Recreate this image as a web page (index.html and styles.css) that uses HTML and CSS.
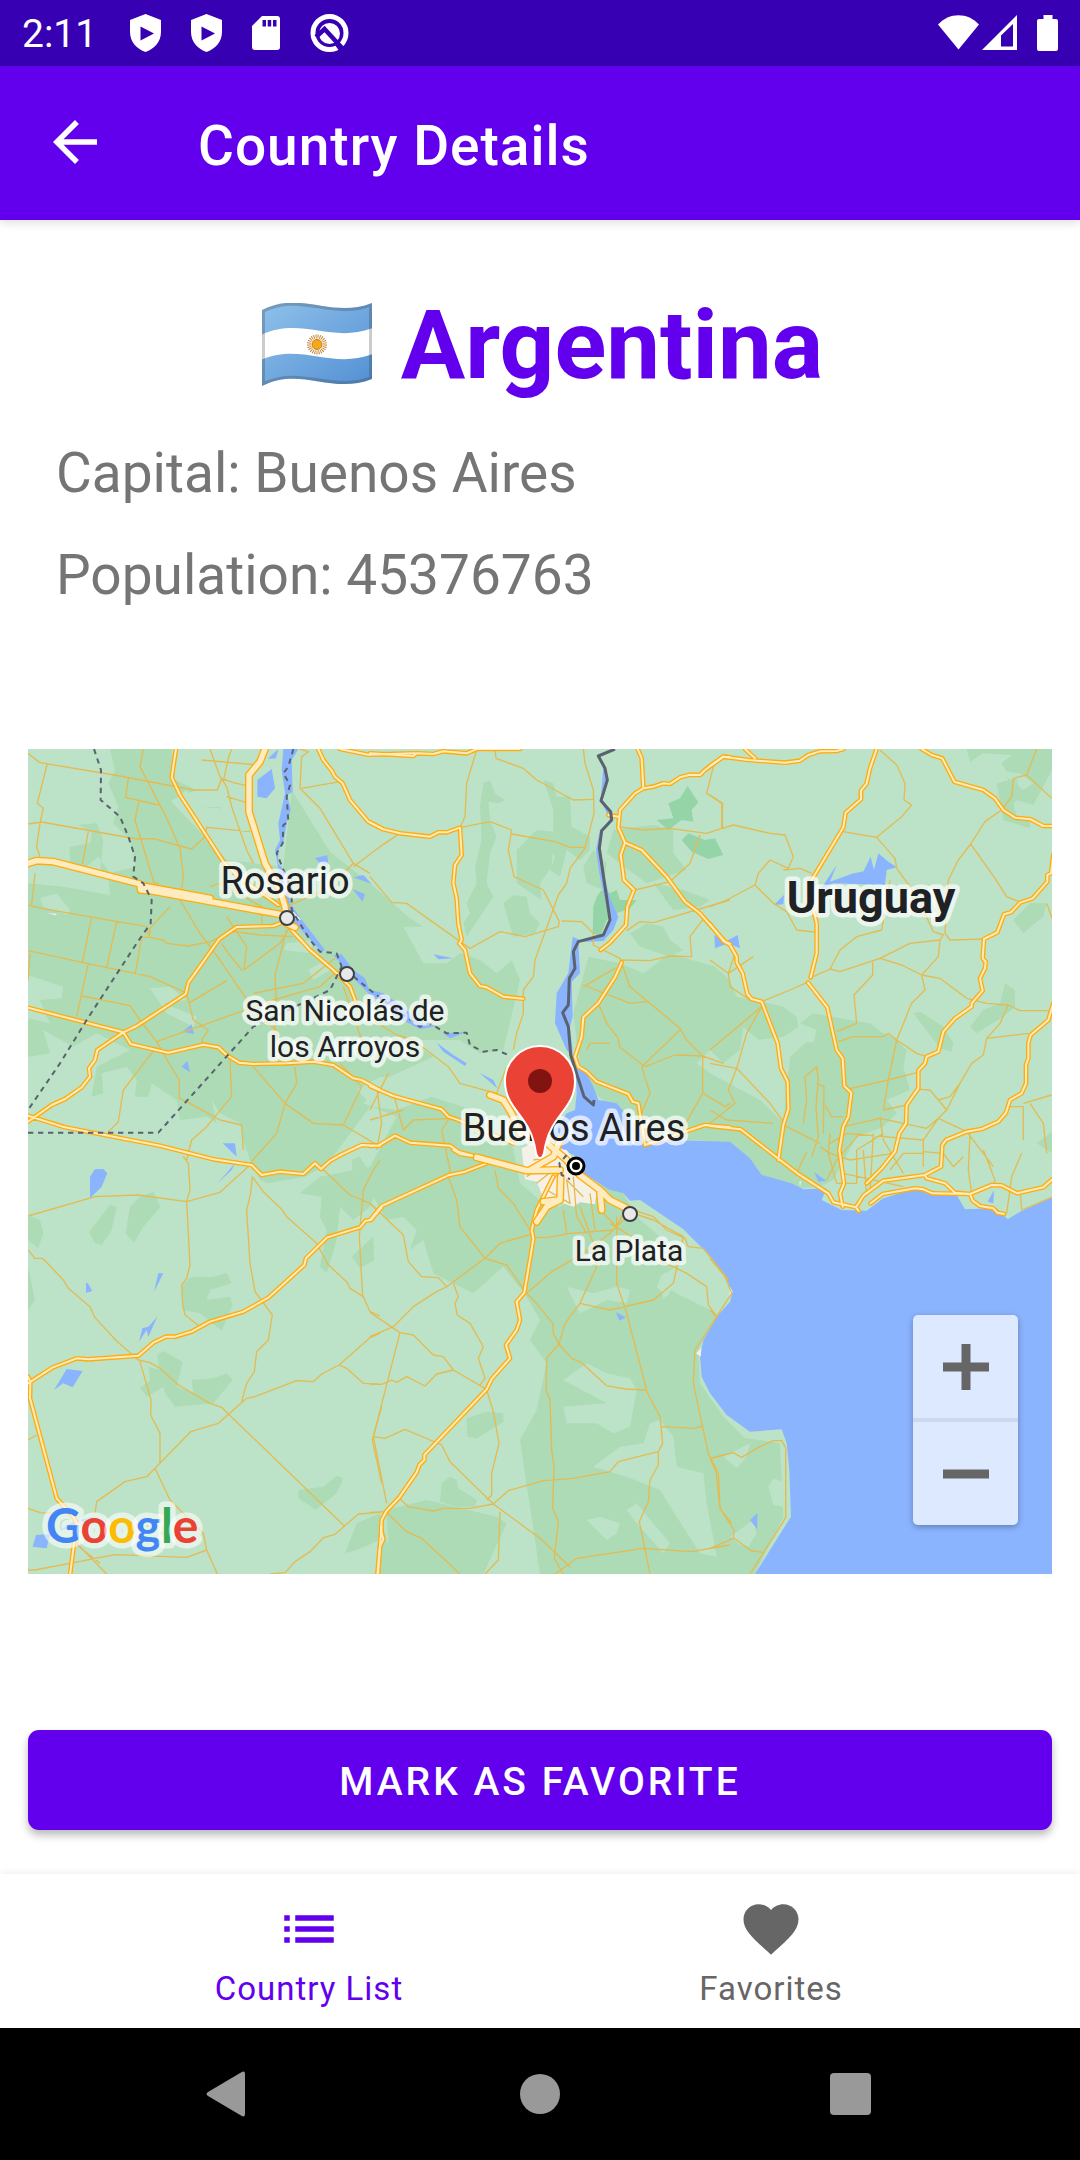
FILE: index.html
```html
<!DOCTYPE html>
<html lang="en">
<head>
<meta charset="utf-8">
<meta name="viewport" content="width=device-width, initial-scale=1">
<title>Country Details</title>
<link rel="stylesheet" href="styles.css">
</head>
<body>
<div class="screen">
  <div class="status-bar">
    <span class="clock">2:11</span>
    <div class="notifications">
      <svg width="31" height="38" viewBox="0 0 31 38"><path fill="#fff" fill-rule="evenodd" d="M15.500 0L31 6V18C31 28 24 35 15.500 38C7 35 0 28 0 18V6ZM10.500 12.500V26.500L24 19.500Z"/></svg>
      <svg width="31" height="38" viewBox="0 0 31 38"><path fill="#fff" fill-rule="evenodd" d="M15.500 0L31 6V18C31 28 24 35 15.500 38C7 35 0 28 0 18V6ZM10.500 12.500V26.500L24 19.500Z"/></svg>
      <svg width="28" height="34" viewBox="0 0 28 34"><path fill="#fff" fill-rule="evenodd" d="M10 0H25a3 3 0 0 1 3 3V31a3 3 0 0 1-3 3H3a3 3 0 0 1-3-3V10ZM10.500 4v6.500h3.500V4ZM15.700 4v6.500h3.500V4ZM21 4v6.500h3.500V4Z"/></svg>
      <svg width="39" height="38" viewBox="0 0 39 38"><circle cx="19.500" cy="19" r="16.500" fill="none" stroke="#fff" stroke-width="5"/><circle cx="19.500" cy="19.500" r="10.500" fill="#fff"/><path d="M6 23 14.500 15 33 35" fill="none" stroke="#3700b3" stroke-width="4.500"/><path d="M26 30 31 37" stroke="#3700b3" stroke-width="3"/></svg>
    </div>
    <div class="system-icons">
      <svg width="41" height="36" viewBox="0 0 41 36"><path fill="#fff" d="M20.500 34.500 0 9.500C11-3 30-3 41 9.500Z"/></svg>
      <svg width="35" height="36" viewBox="0 0 35 36"><path fill="#fff" fill-rule="evenodd" d="M0 35 35 0V35ZM19 20.500V31.500H31V9Z"/></svg>
      <svg class="battery" width="21" height="36" viewBox="0 0 21 36"><path fill="#fff" d="M6.500 0h9v4H19a2 2 0 0 1 2 2V34a2 2 0 0 1-2 2H2a2 2 0 0 1-2-2V6a2 2 0 0 1 2-2h4.500Z"/></svg>
    </div>
  </div>

  <header class="app-bar">
    <button class="icon-button" type="button" aria-label="Back">
      <svg width="66" height="66" viewBox="0 0 24 24"><path fill="#fff" d="M20 11H7.830l5.590-5.590L12 4l-8 8 8 8 1.410-1.410L7.830 13H20v-2z"/></svg>
    </button>
    <h1>Country Details</h1>
  </header>

  <main>
    <h2 class="country">
      <svg class="flag" width="112" height="84" viewBox="0 0 112 84" aria-label="Flag">
        <defs>
          <linearGradient id="sky" x1="0" y1="0" x2="1" y2="1"><stop offset="0" stop-color="#8fc1ea"/><stop offset="1" stop-color="#528fd3"/></linearGradient>
          <clipPath id="wave"><path d="M1 7C40-13 70 16 111 0V76C70 92 40 63 1 83Z"/></clipPath>
        </defs>
        <g clip-path="url(#wave)">
          <path fill="url(#sky)" d="M0 0H112V84H0Z"/>
          <path fill="#fff" d="M0 32C40 13 70 41 112 25V51C70 67 40 39 0 57Z"/>
          <circle cx="56" cy="41.500" r="8" fill="none" stroke="#c88a3a" stroke-width="4" stroke-dasharray="1 1"/>
          <circle cx="56" cy="41.500" r="5" fill="#f6a816" stroke="#c47a1c"/>
          <path fill="none" stroke="#333" stroke-opacity=".25" stroke-width="6" d="M1 7C40-13 70 16 111 0V76C70 92 40 63 1 83Z"/>
        </g>
      </svg>
      <span>Argentina</span>
    </h2>
    <div class="facts">
      <p>Capital: Buenos Aires</p>
      <p>Population: 45376763</p>
    </div>

    <section class="map" aria-label="Map">
      <svg class="map-canvas" viewBox="0 0 1024 825">
        <defs>
          <g id="roads">
            <path d="M468 27 455 112 480 165 610 365 655 410 775 495M895 27 910 60 935 92 945 110 968 130 990 180 1045 245 1085 265M960 27 1045 44 1185 40M24 803 310 877 332 912 445 938 550 914 595 922 620 945 657 968 700 972 800 970 880 965 940 975 1000 1015 1025 1020 1080 1050M780 550 760 558 650 561 598 597 505 728 497 762 350 858 310 877 232 930 225 960 207 985 210 1010 185 1042 135 1077 95 1095 24 1145M24 1127 135 1162 420 1217 580 1258 695 1275 725 1305 780 1295 850 1302 885 1270 903 1287 930 1263 965 1243 1025 1215 1080 1217"/>
            <path d="M815 570 870 630 940 690 990 740 1005 780"/>
            <path transform="translate(1050)" d="M0 40 130 48 140 40 190 42 220 34 290 40 320 27 450 27M0 247 40 268 90 280 180 290 205 277 230 277 270 263 275 345 255 375 250 430 260 475 265 550 275 600 268 610 285 630 300 700 330 738 350 742 400 770 460 776M803 27 815 55 820 145 795 160 750 210 745 262 765 308 752 345 762 420 792 450 772 500 768 555 720 608 692 630M715 225 745 230M820 145 850 140 880 130 900 132 930 112 960 104 990 105 1005 90 1060 50 1080 52M765 308 815 330 890 410 945 485 990 520 1065 605 1080 612M755 667 735 712 685 790 640 832 635 890 615 950 625 980 650 995 680 1025 775 1062 788 1085 805 1090 825 1215 1005 1155 1080 1162M0 1038 70 1068 215 1108 235 1130 260 1138 360 1180 430 1210M0 1218 25 1217 75 1187 120 1208 240 1217 265 1235 320 1250"/>
            <path transform="translate(2070)" d="M0 78 40 50 115 60 225 68 270 62 295 45 330 34 380 33 400 27M105 27 135 55M500 27 480 85 470 130 453 152 453 178 407 218 400 262 305 420 300 470 320 550 320 640 302 712M294 728 352 802 380 930 398 955 403 1038 424 1058 415 1130 400 1160 388 1230 402 1330 390 1360 398 1400M635 27 665 45 697 55 733 125 820 150 855 175 880 210 915 233 962 238 1000 258 1030 258M1030 345 1023 400 1012 405 1012 425 968 475 930 488 903 517 882 523 862 577 822 597 818 655 827 665 825 685 810 715 818 752 785 790 785 800 735 835 700 875 685 935 650 950 645 970 625 992 625 1045 590 1095 588 1150 568 1180 555 1235 515 1285 470 1330M1030 790 1015 840 962 885 955 910 955 955 948 975 948 1030 935 1060 900 1080 888 1118 865 1145 815 1167 770 1175 708 1200 697 1215 693 1280 645 1305 520 1322 460 1367 438 1402 370 1387 355 1360 262 1300 92 1168 0 1158M0 552 40 603 60 615 80 650 80 667 98 700 112 762 125 777 155 785 203 910 213 985 233 1025 235 1108 220 1155 205 1260M645 1305 650 1315 705 1330 735 1358 780 1362 845 1335 875 1336 922 1360 1000 1342 1030 1315M482 1390 518 1362 615 1345 640 1348 668 1360 780 1362 788 1382 810 1398 850 1405 862 1418 882 1422M438 1402 446 1413"/>
            <path transform="translate(0 1230)" d="M1085 172 1053 210 1037 212 1020 232 922 262 858 325 853 345 745 443 670 485 570 515 515 545 465 560 438 560 400 578 355 617 205 628 170 625 97 653 24 700M24 680 31 695 30 745 110 1045 160 1100 170 1120 150 1275M1085 1130 1072 1275"/>
            <path transform="translate(1050 1230)" d="M0 210 35 168 235 76 285 65 350 40M250 0 270 12 320 20M485 240 490 265 483 310 463 428 440 455 450 510 440 540 408 585 420 625 365 687 350 718 163 915 163 930 148 945 140 967 88 1042 48 1085 35 1110 33 1140 40 1168 30 1190 24 1275M550 80 500 180 485 240"/>
          </g>
          <g id="highways">
            <path d="M24 370 50 362 100 365 360 432 362 450 390 452 780 523M370 438 570 475M735 27 720 65 687 105 687 215 735 370 780 450 795 500 800 550 825 562"/>
            <path d="M1370 1252 1520 1292 1620 1290M1410 1065 1450 1080 1475 1120 1500 1180 1570 1200M1620 1200 1600 1250 1530 1290M1570 1200 1640 1260 1680 1305 1740 1350 1770 1380 1830 1410M1740 1360 1745 1410M1622 1310 1620 1380 1580 1400 1550 1445M1570 1385 1620 1380"/>
          </g>
        </defs>
        <rect class="land" width="1024" height="825"/>
        <g transform="translate(-8 -9) scale(.333333)">
          <g class="grass">
            <path d="M270 27 285 90 265 130 295 200 280 250 330 300 345 380 270 400 235 350 175 400 150 370 148 320 210 310 215 275 175 255 230 250 250 300 240 400 265 410 270 465 130 440 24 430V705L130 740 125 775 60 780 90 850 24 835V950L90 940 70 870 160 920 230 880 330 930 230 980 215 1070 250 1060 245 1000 320 980 350 1020 345 1070 385 1070 395 1030 470 1080 480 1140 560 1130 590 1150 575 1080 600 1120 660 1150 670 1200 690 1260 720 1320 740 1330 855 1310 920 1275 1080 1060 1200 1060 1390 1120 1450 1150 1480 1230 1500 1330 1570 1390 1620 1400 1720 1330 1800 1345 1850 1430 2000 1560 1920 1610 1930 1680 1950 1650 2090 1720 2035 1830 2040 1930 2110 2030 2180 2100 2180 2240 2080 2280 2060 2260 2110 2250 2090 2160 2150 2090 2280 2110 2290 2330 2205 2502H1390L1460 2350 1430 2330 1220 2280 1100 2310 1105 2420 1080 2320 1010 2350 975 2440 1010 2430 1080 2400V2502H1560L1500 2100 1550 2010 1580 1870 1530 1800 1560 1740 1520 1670 1450 1580 1360 1660 1240 1600 1210 1500 1170 1530 1190 1470 1150 1430 1100 1440 1060 1370 1050 1400 1000 1440 960 1400 950 1500 920 1600 900 1580 920 1470 900 1430 905 1370 840 1360 900 1310 1050 1280 1130 1130 1030 1090 1110 1010 1240 950 1170 900 1320 900 1380 940 1450 930 1500 720 1475 660 1430 700 1380 660 1320 640 1280 670 1210 670 1150 560 1210 560 1165 530 1050 430 980 375 930 335 815 150 790 380 700 370 650 330 625 280 600 200 500 205 455 180 530 150 465 120 455 27Z"/>
            <path d="M1390 130 1410 120 1425 160 1455 180 1435 190 1405 185 1410 240 1430 290 1410 340 1400 430 1420 470 1340 590 1330 550 1350 520 1340 490 1370 430 1365 380 1385 300 1380 200ZM1570 120 1600 130 1610 170 1650 170 1655 260 1710 290 1710 330 1680 360 1640 330 1620 410 1590 390 1605 350 1580 310 1600 300V210ZM1490 330 1550 270 1600 275 1595 380 1560 430 1565 480 1490 430ZM1450 490 1480 465 1520 470 1530 520 1560 550 1545 580 1480 590ZM1720 330 1760 370 1750 450 1700 430 1690 380ZM1780 270 1900 255 1960 270 1960 340 2000 390 1880 430 1760 340ZM1900 430 1990 450 2070 480 2040 500 1960 510ZM1830 580 1880 550 1930 560 1950 600 1990 630 1950 650 1860 620ZM1705 650 1800 670 1870 700 1950 640 2085 680 2130 720 2150 770 2200 780 2290 800 2330 830 2335 860 2290 890 2215 900 2170 860 2160 930 2110 970 2070 930 2030 970 2070 1000 2220 1080 2290 1150 2310 950 2360 905 2400 910 2410 950 2380 910 2390 870 2340 850 2380 820 2490 840 2550 850 2590 880 2620 890 2660 930 2650 980 2670 1050 2600 1080 2630 1120 2590 1160 2510 1190 2440 1320 2400 1340 2345 1345 2220 1310 2120 1205 1890 1195 1700 1040 1680 980 1660 820ZM2680 820 2700 815 2770 860 2800 910 2795 935 2760 925ZM2850 860 2890 810 2940 790 2955 730 2985 750 2985 800 2950 830 2900 860 2870 880ZM2980 540 3030 490 3080 490 3070 530 3010 580ZM3050 1210 3096 1175V1240ZM2840 27H3096V90L3040 195 2990 180 2960 110 3010 150 3040 130 3000 100 2960 95 2945 70 2975 45 2890 40 2850 65ZM2930 130 2990 115 3000 170 2980 190 2990 230 3030 245 3030 265 2950 240Z"/>
            <path d="M270 1395 290 1400 275 1470 245 1515 225 1510 207 1475ZM360 1370 400 1355 422 1400 370 1460 342 1508 317 1480 330 1400ZM24 1425 60 1440 70 1480 55 1525 24 1500ZM24 1580 45 1680 24 1710ZM510 1612 580 1610 620 1598 635 1630 570 1650 560 1680 630 1670 638 1695 605 1772 540 1720 490 1710 485 1640ZM410 1845 430 1833 488 1865 470 1940 520 1960 515 1920 580 1915 620 1900 638 1920 580 1990 465 2000 435 1960 430 1940 380 1970 360 1945 390 1920 385 1880 420 1890ZM835 2250 910 2240 950 2207 970 2215 950 2260 887 2310 835 2275ZM995 1260 1020 1250 1050 1300 1030 1340 985 1340 1000 1310ZM995 1550 1060 1490 1063 1560 1020 1585ZM1340 2035 1400 2015 1450 2020 1450 2045 1370 2095 1342 2090ZM1260 2285 1265 2230 1290 2210 1310 2220 1315 2245 1370 2280 1365 2300 1310 2300Z"/>
          </g>
          <g class="land">
            <path d="M455 185 500 150 520 200 600 205 640 310 710 370 620 360ZM640 27 700 27 680 80 600 70ZM60 475 110 460 150 510 140 525 70 500ZM390 745 450 740 500 780 430 790 530 830 520 860 440 820ZM800 610 880 600 870 640 790 630ZM865 690 900 670 930 690 880 720ZM1010 1050 1080 1010 1180 1020 1240 1010 1260 1060 1130 1110 1060 1100ZM1640 1640 1720 1660 1790 1640 1830 1650 1820 1690 1760 1680 1680 1720ZM1930 1600 2020 1580 2060 1640 1990 1600 1940 1670 1910 1640ZM1630 1920 1700 1870 1760 1900 1830 1915 1850 1950 1830 2060 1780 2080 1730 2050 1640 2050 1630 2000 1760 1990ZM1720 2180 1800 2120 1870 2110 1890 2050 1920 2040 1960 2090 1970 2180 2050 2200 2060 2290 2090 2450 2040 2440 1970 2330 1920 2250 1820 2210ZM1700 2340 1740 2330 1800 2350 1790 2380 1760 2400ZM1820 2310 1850 2290 1950 2410 1930 2440 1850 2350ZM2110 2150 2190 2110 2180 2150 2150 2185ZM2130 2390 2200 2340 2210 2380 2185 2420 2160 2415ZM2245 2240 2260 2215 2290 2225 2290 2300 2260 2295Z"/>
          </g>
          <g class="forest">
            <path d="M1945 190 1980 175 2003 138 2035 187 2015 210 2020 245 1985 240 1945 270 1910 240 1960 235ZM1985 300 2005 280 2055 300 2085 295 2110 345 2065 357 2015 335ZM1730 470 1745 450 1770 460 1790 450 1800 480 1850 480 1830 505 1790 520 1760 540 1740 590 1718 580 1720 500ZM2510 400 2540 390 2550 430 2510 430Z"/>
          </g>
          <g class="water">
            <path d="M1650 935 1675 985 1690 980 1720 1040 1735 1080 1790 1090 1850 1160 1875 1200 1950 1200 2130 1205 2190 1255 2225 1305 2315 1330 2350 1348 2420 1345 2405 1380 2465 1410 2540 1412 2590 1375 2690 1345 2810 1365 2835 1408 2930 1405 2963 1438 3000 1415 3096 1370V2502H2205L2313 2330 2308 2190 2300 2110 2285 2068 2190 2075 2120 2025 2070 1960 2045 1910 2040 1850 2050 1800 2090 1730 2130 1685 2137 1655 2112 1605 2070 1548 1990 1468 1860 1380 1830 1382 1810 1360 1765 1348 1690 1300 1670 1250 1630 1230 1590 1190 1640 1120 1665 1110 1670 1060 1668 1000Z"/>
            <path d="M1750 80 1765 120 1748 180 1775 215 1765 250 1745 275 1738 320 1750 400 1770 475 1795 530 1780 570 1750 603 1710 605 1675 605 1680 700 1655 725 1658 830 1650 860 1660 950 1640 930 1605 850 1610 760 1645 700 1658 590 1680 600 1745 585 1768 540 1738 400 1728 330 1740 270 1770 240 1742 180ZM750 50 775 27 768 55 745 57ZM790 27H835L815 60 818 155 802 165 812 210 800 250 790 310 775 330 775 370 800 400 810 490 850 545 915 630 905 635 820 545 790 470 765 330 780 300 775 250 795 160 785 90ZM712 120 755 87 765 145 740 175 712 170ZM885 355 922 345 925 375 900 370ZM1000 412 1030 405 1055 432ZM998 448 1035 462 1028 485ZM940 645 965 643 1000 690 1035 715 1050 755 1080 755 1090 780 1060 775 1000 715ZM488 875 515 853 522 882ZM485 980 502 962 510 997ZM608 1210H645L650 1250ZM1050 750 1090 760 1150 800 1200 850 1250 858 1200 868 1130 830ZM1270 880 1340 876 1290 895ZM1250 908 1300 945 1340 970 1335 978 1270 935ZM1378 998 1420 1020 1432 1045ZM1240 643 1300 655 1255 658ZM2400 450 2450 375 2430 425 2500 400 2530 395 2552 350 2562 390 2575 340 2605 365 2630 382 2600 390 2595 435 2440 430ZM2262 495 2292 465 2290 493ZM2083 585 2115 605 2153 585 2160 625 2125 610 2085 625ZM2383 1297 2420 1323 2395 1325ZM2903 1385 2922 1350 2920 1390Z"/>
            <path d="M210 1310 225 1287H250L262 1300 245 1340 210 1375ZM593 1330 645 1270 635 1290ZM198 1628 203 1629 217 1653 198 1658ZM402 1655 415 1600H430ZM357 1805 367 1765 385 1760 412 1730 385 1790 380 1770ZM102 1950 140 1887 188 1893 158 1942 130 1930ZM38 2420 48 2385 90 2382 80 2425ZM120 2370 160 2345 220 2330 200 2360ZM1788 1717 1818 1732 1798 1742ZM2190 2340 2212 2320V2368Z"/>
          </g>
          <g class="city">
            <path d="M1505 1225 1560 1200 1600 1225 1640 1230 1690 1300 1730 1350 1725 1393 1680 1387 1660 1400 1630 1390 1570 1375 1550 1325 1515 1318Z"/>
            <path d="M2044 1825 2042 1850 2028 1840ZM815 510 845 540 825 535ZM2130 1640 2138 1655 2128 1670ZM80 520 110 521 108 526ZM2338 1325 2344 1322 2340 1340Z"/>
          </g>
          <g class="lanes">
            <path d="M24 40 60 68 300 108 520 150 592 150 605 115 640 128 680 137M370 27 360 80 438 230 480 325M82 70 52 190 70 205 60 250 50 320 60 350M24 252 65 246 350 297 400 296 515 327 555 290 560 262 690 275M205 275 187 372M325 115 317 172 415 195 357 182 345 240 402 428 415 430M480 325 490 410 480 480 540 580 600 660 715 830 770 870 775 960M570 27 600 110 620 140 635 200 680 330 700 370M610 125 625 55 635 27M620 170 680 188M545 60 715 75M45 400 35 495M24 495 65 505 380 560 388 592 430 600 440 610 505 618 570 605 640 575 720 585 820 590M388 592 390 565 450 500M24 632 200 670 390 710 497 758M215 530 187 668M290 545 260 683M388 592 365 592 345 705M205 670 170 830M187 768 330 797 360 840 410 905 450 975 478 1020 478 1075 500 1085 600 1140 665 1155 670 1230M30 640 24 720M800 570 765 705 770 820 760 900M625 640 665 690 625 640 605 610M620 530 680 620 672 690 780 610 810 560M505 790 620 722M500 760 520 840 565 870 545 900 555 920M410 905 620 830 760 780 900 740 955 690M945 655 900 690 850 730 700 760M410 920 310 1050 295 1145 265 1175M700 980 795 1090 770 1180 690 1270M630 960 635 1070 560 1160 515 1200 500 1260M795 1090 880 1150 970 1155 1080 1220M825 980 830 1030 795 1090M960 970 1025 1040 970 1155M970 740 1025 900M838 27 865 35 845 50 840 145 900 205 1000 370 990 380 940 430 900 455 800 500M845 145 960 125M1000 370 1050 400M1000 380 1080 320 1135 283M725 560 725 500 600 430 570 440"/>
            <path transform="translate(1050)" d="M320 30 290 130 285 230 270 263 360 245 425 270 415 330 432 410 520 450 568 545M425 282 555 305 600 322 645 322M375 27 378 55 460 85 500 120 610 180 670 178M568 545 565 560 465 590 390 575 300 625 215 565 110 490 65 487 0 410M575 543 635 545 670 580 670 615 750 655 780 740 930 865 950 900 998 948 998 1060M755 660 840 662 900 648 965 650 960 590 1005 530M640 740 735 685M640 735 780 790 830 785M685 790 710 850 745 895 748 920 825 980 915 945 998 948 1060 970M745 260 820 270 900 265 1010 280 1055 265 1058 190 1010 160 1030 80M990 285 960 370 900 425 795 450M770 572 810 545 850 548 1080 480M930 870 815 980 840 1060 810 1130M650 930 660 910 720 910M998 1060 930 1180M1000 1060 1065 1100 1080 1090M0 1110 55 1000M0 1140 100 1110M70 1060 100 1170 130 1140 250 1135M20 1040 35 1150 20 1230M235 1140 215 1170 240 1290 235 1310"/>
            <path transform="translate(2070)" d="M0 165 35 190 38 265 70 255 180 280 225 285 250 350 235 385 180 360 145 400 135 435 190 490 230 515 260 570 320 577M0 500 50 480 135 435M220 390 270 385 305 400M510 30 560 75 585 130 582 180 605 195 575 230 500 292 400 275M500 292 555 355 560 385 600 440 640 510 670 575 700 585 690 600 600 610 510 655 390 695 360 687 390 630 440 590 515 570 540 420M310 710 360 687M155 785 240 750 290 728M488 660 488 705 432 765 440 850 380 875M385 905 430 890 520 890 535 880 560 900 620 940 650 950M510 655 575 675 635 705 690 715 770 775 830 790 895 795 930 812 1030 812M690 600 685 650 635 705 645 750 605 790 560 900 535 1020 520 1110M715 420 705 580 720 600 820 597M715 420 745 360 782 312 825 245 875 210 905 170 910 115 950 105 980 27M950 105 1025 175M782 312 855 415 890 470 935 488M895 795 870 850 830 895 820 945 785 970 750 1030 720 1070 685 1080 660 1050 628 1048M830 895 955 880M410 1048 535 1020 620 998M400 1160 510 1135 650 1165 685 1135 770 1175 850 1280M685 1080 710 1110 685 1135 640 1200 640 1280M710 1110 750 1030M0 970 80 985 180 1090 230 1160 330 1210M80 985 55 1050 75 1090 0 1150M80 985 110 880 155 800 0 930M0 1110 50 1140 190 1150M280 1150 290 1080 285 1010 320 980 325 1020 318 1100 325 1190 305 1250M320 1030 342 1040 340 1180M345 1095 365 1130 400 1130M520 1110 590 1095M510 1130 520 1200 580 1300M520 1180 440 1230 440 1330 380 1330M360 1210 410 1180 640 1200M330 1220 360 1240 420 1260 550 1240M450 1180 380 1260 350 1320M360 1180 355 1240 380 1330M490 1180 480 1360M400 1300 580 1340M460 1230 470 1370M780 1180 775 1290 785 1360M820 1230 855 1320 850 1340M935 1240 905 1310 890 1420M940 1200 940 1100 890 1100M940 1090 1025 1065M960 1090 1000 1150 1010 1240M930 1350 935 1410 1030 1370M260 1300 290 1235M640 1235 700 1240 730 1280 760 1250M640 1240 580 1240 540 1290M130 650 55 700 60 740 120 780M0 660 55 700 75 640M1010 490 1030 545"/>
            <path transform="translate(0 1230)" d="M24 198 225 140 355 135 500 155 600 127 690 45M24 300 45 325 68 325 130 390 145 415 210 470 225 503 290 573 355 630 390 638 420 655 475 705 570 760 605 772 625 792 805 965 975 1130M500 155 510 345 500 385 485 405 488 465 495 495 540 530M490 20 505 40 510 120 500 155M697 80 730 125 785 178 800 200 890 280 925 345 980 395 990 415 1030 440 1050 485 1080 498M697 80 692 130 680 180 690 340 705 425 757 495 745 570 710 605 703 665 680 700 665 755M895 45 990 135 1050 160 1080 190M1080 30 1060 60 1030 120 1018 260 1028 440M1080 550 1050 563 957 645 905 672 880 695 830 692 705 740 680 745 595 820 512 845 380 980 315 995 230 1055 225 1090M957 645 980 655 1030 700 1080 703M360 635 393 750 392 795 420 850 420 940M405 955 450 1050 550 1150 560 1200 592 1272M24 870 50 855M24 1075 60 1088 130 1090M24 1260 45 1260 285 1214 500 1222 560 1200M170 1180 260 1272M750 1272 795 1268 825 1235 870 1205 910 1163 945 1153 1015 1092 1080 1087M1085 770 1057 870 1085 1000M240 1240 170 1185"/>
            <path transform="translate(1050 1230)" d="M0 160 100 255 115 335 155 380 205 383 230 410 345 325 410 345 470 430 495 455 548 520 550 550 567 582 605 625 635 638 710 707 765 717 828 720 870 800 878 880 865 905 865 945 840 990 835 1055 808 1115 840 1272M235 80 260 150 270 230 345 325 390 280 485 252M470 430 545 365 640 310 720 250 780 190M375 60 385 115 430 160 480 240M490 262 530 263 600 250 730 240M250 400 265 440 255 460 262 495 300 520 340 590 325 625 345 685 330 705M350 718 250 660 220 620 190 615 130 555 90 548 0 487M0 560 70 530 130 470 200 425 235 408M90 548 10 860 50 1060M0 702 35 703 65 690 80 697 110 680 165 708 200 672 250 660M10 860 45 865 105 838 180 870 215 885 240 935 370 1062 510 1165 600 1250M350 720 370 785 387 880 365 970 365 1035 350 1050M88 1045 115 1070 190 1083 220 1075 300 1075 370 1062 415 1022 520 992 610 985 720 965 745 935 865 905M390 1085 385 1230 345 1272M0 1087 48 1085 110 1145 155 1165 270 1272M567 582 530 625 528 720 540 750 545 900 552 950 548 1075 565 1115 553 1225 580 1272M555 1272 620 1225 820 1195 965 1205 1080 1185M567 582 585 520 630 460 720 480 850 450 910 400 940 260 850 210 790 190M630 460 680 350 670 280 630 170M740 200 740 400 770 490 830 720M720 220 770 250 860 325 950 370 1010 410 1015 465 1040 500 975 600 970 700 1015 910 1045 970 1050 1075 1085 1120M875 830 975 835 995 828M1025 925 1080 910M790 180 850 200 890 240 945 265 955 290 1000 295 1075 390M580 180 590 250M660 130 675 240M700 190 740 230 760 190M570 60 530 120 600 160 590 90 640 140M500 100 550 60M470 80 560 20 490 30M610 80 620 200 650 250"/>
            <path transform="translate(2070 1230)" d="M0 325 45 380 65 430 0 530M0 480 20 500M0 925 70 908 95 922 150 890 190 872 215 872 227 893V1103L120 1272M0 925 18 965 30 1075 72 1140 70 1165 0 1195M72 1165 125 1203 160 1207"/>
            <path d="M1690 27 1695 70 1720 150 1722 220 1695 325 1650 385 1640 430 1615 465 1545 660 1540 710 1510 750V820L1490 880 1480 930M1460 980 1430 1060 1320 1030 1285 980 1180 900 1130 885 1040 830 1005 780"/>
          </g>
          <use href="#roads" class="road-edge"/><use href="#roads" class="road"/>
          <use href="#highways" class="highway-edge"/><use href="#highways" class="highway"/>
          <path class="province" d="M222 27 243 90 242 180 300 230 325 290 345 350 340 410 370 430 395 480 392 550 350 610 200 840 120 970 24 1110M24 1178H415L700 860 930 750 965 680M820 27 805 80 790 100 810 135 800 170 805 245 790 255 788 310 770 340 815 450 815 510 870 600 900 635 950 640 965 680 1050 750 1130 810 1200 860 1230 850 1280 880 1340 878 1350 915 1390 935 1430 930 1465 945"/>
          <path class="province" d="M1640 1245 1618 1270 1625 1305 1650 1318"/>
          <path class="border" d="M1785 27 1735 48 1755 85 1762 120 1743 182 1772 215 1775 240 1745 272 1738 325 1770 540 1750 585 1675 605 1660 635 1665 685 1648 715 1645 795 1628 818 1645 860 1652 945 1692 1070 1720 1095 1722 1080"/>
        </g>
        <g class="town">
          <circle cx="259" cy="169" r="7"/><circle cx="319" cy="225" r="7"/><circle cx="602" cy="465" r="7"/>
        </g>
        <circle class="capital-ring" cx="548" cy="417" r="8"/><circle cx="548" cy="417" r="4"/>
        <g class="map-label">
          <text class="city-name" x="257" y="145">Rosario</text>
          <text class="city-name" x="546" y="392">Buenos Aires</text>
          <text class="town-name" x="317" y="272">San Nicolás de</text>
          <text class="town-name" x="317" y="308">los Arroyos</text>
          <text class="town-name" x="601" y="512">La Plata</text>
          <text class="nation-name" x="843" y="164">Uruguay</text>
        </g>
        <path class="pin" d="M512 409C507 409 508 400 506 394 499 365 477 359 477 332A35 35 0 0 1 547 332C547 359 525 365 518 394 516 400 517 409 512 409Z"/>
        <circle cx="512" cy="332" r="12" fill="#811411"/>
        <text class="brand" x="18" y="794"><tspan fill="#4285f4">G</tspan><tspan fill="#ea4335">o</tspan><tspan fill="#fbbc05">o</tspan><tspan fill="#4285f4">g</tspan><tspan fill="#34a853">l</tspan><tspan fill="#ea4335">e</tspan></text>
      </svg>
      <div class="zoom">
        <button type="button" aria-label="Zoom in"><svg width="46" height="46" viewBox="0 0 46 46"><path d="M0 18.500H18.500V0h9V18.500H46v9H27.500V46h-9V27.500H0Z"/></svg></button>
        <button type="button" aria-label="Zoom out"><svg width="46" height="46" viewBox="0 0 46 46"><path d="M0 18.500H46v9H0Z"/></svg></button>
      </div>
    </section>

    <button class="primary" type="button">MARK AS FAVORITE</button>
  </main>

  <nav class="tabs">
    <a class="tab active" href="#list">
      <svg width="66" height="66" viewBox="0 0 24 24"><path d="M3 13h2v-2H3v2zm0 4h2v-2H3v2zm0-8h2V7H3v2zm4 4h14v-2H7v2zm0 4h14v-2H7v2zM7 7v2h14V7H7z"/></svg>
      <span>Country List</span>
    </a>
    <a class="tab" href="#favorites">
      <svg width="66" height="66" viewBox="0 0 24 24"><path d="M12 21.350l-1.450-1.320C5.400 15.360 2 12.280 2 8.500 2 5.420 4.420 3 7.500 3c1.740 0 3.410.810 4.500 2.090C13.090 3.810 14.760 3 16.500 3 19.580 3 22 5.420 22 8.500c0 3.780-3.400 6.860-8.550 11.540L12 21.350z"/></svg>
      <span>Favorites</span>
    </a>
  </nav>

  <div class="system-nav">
    <button type="button" aria-label="System back"><svg width="46" height="46" viewBox="0 0 46 46"><path d="M36 1.500Q40 -1 40 3V43Q40 47 36 44.500L3 25Q0 23 3 21Z"/></svg></button>
    <button type="button" aria-label="Home"><svg width="46" height="46" viewBox="0 0 46 46"><circle cx="23" cy="23" r="20"/></svg></button>
    <button type="button" aria-label="Recent apps"><svg width="46" height="46" viewBox="0 0 46 46"><rect x="1" y="2" width="41" height="42" rx="4"/></svg></button>
  </div>
</div>
</body>
</html>
```
FILE: styles.css
```css
* { box-sizing: border-box; }

body {
  margin: 0;
  background: #fff;
  font-family: Roboto, "Noto Sans", sans-serif;
}

button {
  margin: 0;
  padding: 0;
  border: 0;
  background: none;
  font: inherit;
}

svg { display: block; }

.screen {
  display: flex;
  flex-direction: column;
  min-height: 100vh;
}

.status-bar {
  display: flex;
  align-items: center;
  height: 66px;
  padding: 0 22px;
  background: #3700b3;
  color: #fff;
}

.clock {
  padding-top: 2px;
  font-size: 39px;
  line-height: 44px;
}

.notifications {
  display: flex;
  align-items: center;
  gap: 30px;
  margin-left: 33px;
}

.system-icons {
  display: flex;
  align-items: center;
  gap: 3px;
  margin-left: auto;
}

.battery { margin-left: 17px; }

.app-bar {
  display: flex;
  align-items: center;
  gap: 90px;
  height: 154px;
  padding: 0 42px;
  background: #6200ee;
  color: #fff;
  box-shadow: 0 2px 10px rgba(0, 0, 0, .15);
}

.icon-button { padding-bottom: 3px; }

h1 {
  margin: 0;
  padding-top: 6px;
  font-size: 55px;
  font-weight: 500;
  line-height: 64px;
  letter-spacing: 1px;
}

main {
  display: flex;
  flex: 1;
  flex-direction: column;
  padding: 69px 28px 44px;
}

.country {
  display: flex;
  align-items: center;
  justify-content: center;
  gap: 28px;
  margin: 0;
  padding-left: 4px;
  color: #6200ee;
  font-size: 96px;
  font-weight: 700;
  line-height: 112px;
}

.facts {
  display: flex;
  flex-direction: column;
  gap: 38px;
  margin: 40px 28px 142px;
  color: #757575;
  font-size: 55px;
  line-height: 64px;
}

.facts p { margin: 0; }

.map { position: relative; }

.map-canvas {
  width: 100%;
  height: auto;
}

.land { fill: #bce3c7; }
.grass { fill: #addbb6; }
.forest { fill: #94d4a7; }
.water { fill: #8bb4ff; }
.city { fill: #f5f1e6; }

.lanes, .border, .province, .road, .road-edge, .highway, .highway-edge {
  fill: none;
  stroke-linejoin: round;
}

.lanes { stroke: #e3bb52; stroke-width: 4; }
.road-edge { stroke: #ffac0a; stroke-width: 14; stroke-linecap: round; }
.road { stroke: #ffebc0; stroke-width: 6; stroke-linecap: round; }
.highway-edge { stroke: #ffac0a; stroke-width: 24; stroke-linecap: round; }
.highway { stroke: #ffebc0; stroke-width: 16; stroke-linecap: round; }
.border { stroke: #5a6270; stroke-width: 9; }
.province { stroke: #5a6270; stroke-width: 6; stroke-dasharray: 16 14; }

.town { fill: #e8e8e8; stroke: #3c4043; stroke-width: 2; }
.capital-ring { fill: #fff; stroke: #000; stroke-width: 3; }

.map-label {
  fill: #202124;
  stroke: rgba(255, 255, 255, .7);
  stroke-width: 9;
  stroke-linejoin: round;
  paint-order: stroke;
  text-anchor: middle;
}

.city-name { font-size: 38px; }
.town-name { font-size: 30px; }
.nation-name { font-size: 45px; font-weight: 700; }

.pin { fill: #ea4335; stroke: #fff; stroke-width: 2; }

.brand {
  font-family: Lato, sans-serif;
  font-size: 48px;
  font-weight: 700;
  stroke: rgba(255, 255, 255, .6);
  stroke-width: 11;
  stroke-linejoin: round;
  paint-order: stroke;
}

.zoom {
  position: absolute;
  right: 34px;
  bottom: 49px;
  display: flex;
  flex-direction: column;
  width: 105px;
  border-radius: 5px;
  background: rgba(255, 255, 255, .7);
  box-shadow: 0 2px 6px rgba(0, 0, 0, .3);
  overflow: hidden;
}

.zoom button {
  display: flex;
  align-items: center;
  justify-content: center;
  height: 103px;
  fill: #666;
}

.zoom button + button {
  height: 107px;
  border-top: 4px solid #cbd9ee;
}

.primary {
  height: 100px;
  margin-top: 156px;
  padding-top: 3px;
  border-radius: 11px;
  background: #6200ee;
  box-shadow: 0 5px 8px rgba(0, 0, 0, .28);
  color: #fff;
  font-size: 39px;
  font-weight: 500;
  line-height: 46px;
  letter-spacing: 3px;
}

.tabs {
  display: flex;
  justify-content: center;
  height: 154px;
  background: #fff;
  box-shadow: 0 -2px 6px rgba(0, 0, 0, .06);
}

.tab {
  display: flex;
  flex: 0 1 462px;
  flex-direction: column;
  align-items: center;
  gap: 8px;
  padding-top: 22px;
  color: #666;
  fill: currentColor;
  font-size: 33px;
  line-height: 38px;
  letter-spacing: 1px;
  text-decoration: none;
}

.tab.active { color: #6200ee; }

.system-nav {
  display: flex;
  align-items: center;
  justify-content: center;
  gap: 266px;
  height: 132px;
  background: #000;
  fill: #999;
}
```
